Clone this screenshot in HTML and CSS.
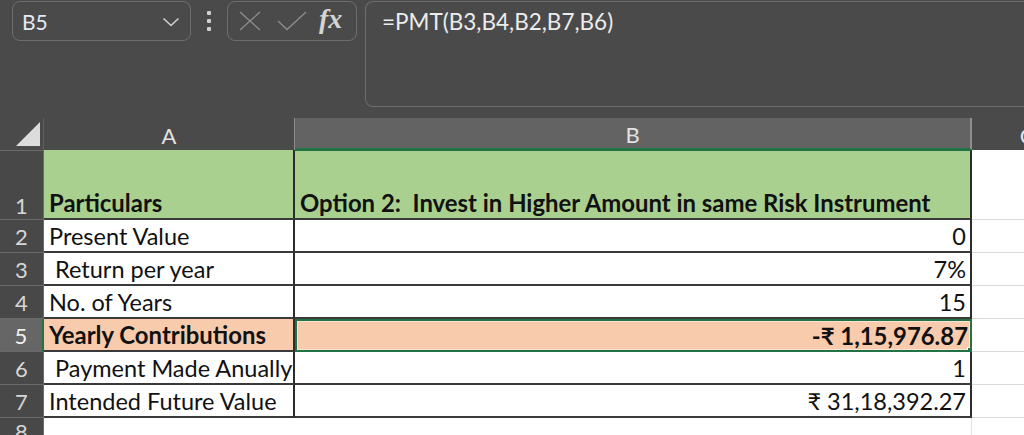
FILE: index.html
```html
<!DOCTYPE html>
<html>
<head>
<meta charset="utf-8">
<title>Excel PMT</title>
<link rel="stylesheet" href="styles.css">
</head>
<body>
<div class="topbar">
  <div class="namebox">
    <span class="nameref">B5</span>
    <svg class="chev" width="18" height="10" viewBox="0 0 18 10"><path d="M1.5 1.5 L9 8.5 L16.5 1.5" fill="none" stroke="#cfcfcf" stroke-width="1.6"/></svg>
  </div>
  <div class="dots">
    <span class="dot"></span><span class="dot"></span><span class="dot"></span>
  </div>
  <div class="fxbox">
    <svg class="ico" width="24" height="20" viewBox="0 0 24 20"><path d="M2 1 L22 19 M22 1 L2 19" fill="none" stroke="#8c8c8c" stroke-width="1.4"/></svg>
    <svg class="ico" width="30" height="20" viewBox="0 0 30 20"><path d="M1 10 L10 18.5 L29 1" fill="none" stroke="#8c8c8c" stroke-width="1.4"/></svg>
    <span class="fx">fx</span>
  </div>
  <div class="formula">=PMT(B3,B4,B2,B7,B6)</div>
</div>
<div class="sheet">
  <div class="corner"><svg width="26" height="26" viewBox="0 0 26 26"><path d="M25 1 L25 25 L1 25 Z" fill="#dcdcdc"/></svg></div>
  <div class="colhead">A</div>
  <div class="colhead sel">B</div>
  <div class="colhead last">C</div>

  <div class="rowhead r1">1</div>
  <div class="cell a green bold bottom">Particulars</div>
  <div class="cell b green bold bottom top-sel pre">Option 2:  Invest in Higher Amount in same Risk Instrument</div>
  <div class="cell c"></div>

  <div class="rowhead">2</div>
  <div class="cell a">Present Value</div>
  <div class="cell b num">0</div>
  <div class="cell c"></div>

  <div class="rowhead">3</div>
  <div class="cell a pre"> Return per year</div>
  <div class="cell b num">7%</div>
  <div class="cell c"></div>

  <div class="rowhead">4</div>
  <div class="cell a">No. of Years</div>
  <div class="cell b num">15</div>
  <div class="cell c"></div>

  <div class="rowhead sel">5</div>
  <div class="cell a orange bold">Yearly Contributions</div>
  <div class="cell b orange bold num active">-₹ 1,15,976.87</div>
  <div class="cell c"></div>

  <div class="rowhead">6</div>
  <div class="cell a pre"> Payment Made Anually</div>
  <div class="cell b num">1</div>
  <div class="cell c"></div>

  <div class="rowhead">7</div>
  <div class="cell a">Intended Future Value</div>
  <div class="cell b num">₹ 31,18,392.27</div>
  <div class="cell c"></div>

  <div class="rowhead r8">8</div>
  <div class="cell a plain"></div>
  <div class="cell b plain"></div>
  <div class="cell c"></div>
</div>
</body>
</html>
```
FILE: styles.css
```css
html, body {
  margin: 0;
  padding: 0;
}
body {
  width: 1024px;
  height: 435px;
  overflow: hidden;
  background: #ffffff;
  font-family: Lato, "Liberation Sans", sans-serif;
}

/* ---------- formula bar ---------- */
.topbar {
  height: 118px;
  box-sizing: border-box;
  background: #4a4a4a;
  display: flex;
  align-items: flex-start;
  padding: 1px 0 0 12px;
}
.namebox {
  width: 179px;
  height: 40px;
  box-sizing: border-box;
  border: 1px solid #6e6e6e;
  border-radius: 8px;
  display: flex;
  align-items: center;
  justify-content: space-between;
  padding: 0 10px 0 9px;
}
.nameref {
  color: #e3e9f2;
  font-size: 21px;
}
.chev {
  display: block;
  margin-top: 2px;
}
.dots {
  width: 36px;
  height: 40px;
  display: flex;
  flex-direction: column;
  align-items: center;
  justify-content: center;
  gap: 4px;
}
.dot {
  width: 4px;
  height: 4px;
  border-radius: 1px;
  background: #cfcfcf;
}
.fxbox {
  width: 130px;
  height: 40px;
  box-sizing: border-box;
  border: 1px solid #6e6e6e;
  border-radius: 8px;
  display: flex;
  align-items: center;
  padding: 0 0 0 10px;
  gap: 15px;
}
.ico {
  display: block;
}
.fx {
  font-family: "Liberation Serif", "DejaVu Serif", serif;
  font-style: italic;
  font-weight: 700;
  font-size: 28px;
  line-height: 1;
  color: #d4d4d4;
  margin-left: -3px;
  margin-top: -4px;
}
.formula {
  flex: 1;
  height: 106px;
  box-sizing: border-box;
  margin-left: 8px;
  border: 1px solid #6e6e6e;
  border-right: none;
  border-radius: 8px 0 0 8px;
  padding: 6px 0 0 16px;
  color: #ececec;
  font-size: 22.5px;
}

/* ---------- sheet ---------- */
.sheet {
  display: grid;
  grid-template-columns: 44px 251px 677px 110px;
  grid-template-rows: 32px 70px repeat(6, 33px) 30px;
  background: #ffffff;
}
.corner {
  background: #4a4a4a;
  display: flex;
  align-items: flex-end;
  justify-content: flex-end;
  padding: 0 2px 3px 0;
  box-sizing: border-box;
  border-right: 1px solid #5e5e5e;
}
.corner svg {
  display: block;
}
.colhead {
  background: #4a4a4a;
  color: #e2e2e2;
  font-size: 22px;
  display: flex;
  align-items: center;
  justify-content: center;
  border-right: 1px solid #8a8a8a;
  box-sizing: border-box;
  padding-top: 2px;
}
.colhead.sel {
  background: #636363;
  border-bottom: 2px solid #217346;
  border-right: 2px solid #8f8f8f;
}
.colhead.last {
  color: #dfe6f3;
  border-right: none;
}
.rowhead {
  background: #484848;
  color: #d6d6d6;
  font-size: 22px;
  display: flex;
  align-items: center;
  justify-content: center;
  border-bottom: 1px solid #6a6a6a;
  border-right: 1px solid #6a6a6a;
  box-sizing: border-box;
}
.rowhead.r1 {
  align-items: flex-end;
  padding-bottom: 0;
  border-top: 1px solid #6a6a6a;
}
.rowhead.sel {
  background: #666666;
  color: #f0f0f0;
  border-right: 2px solid #217346;
}
.rowhead.r8 {
  align-items: flex-start;
  border-bottom: none;
}
.cell {
  box-sizing: border-box;
  font-size: 23.5px;
  color: #111111;
  display: flex;
  align-items: center;
  padding: 0 5px;
  white-space: nowrap;
  overflow: hidden;
}
.cell.a {
  border-right: 2px solid #2c2c2c;
  border-bottom: 2px solid #3a3a3a;
}
.cell.b {
  border-right: 2px solid #2c2c2c;
  border-bottom: 2px solid #3a3a3a;
}
.cell.c {
  border-bottom: 1px solid #dadada;
}
.cell.plain {
  border-bottom: none;
}
.cell.a.plain {
  border-right: none;
}
.cell.b.plain {
  border-right: 1px solid #e2e2e2;
}
.pre {
  white-space: pre;
}
.bold {
  font-weight: 700;
  font-size: 23.9px;
}
.bottom {
  align-items: flex-end;
  padding-bottom: 1px;
}
.green {
  background: #a9d08e;
}
.orange {
  background: #f8cbad;
}
.num {
  justify-content: flex-end;
  padding-right: 4px;
}
.top-sel {
  border-top: 1px solid #217346;
}
.cell.active {
  position: relative;
  border: 2px solid #217346;
  box-shadow: inset 0 0 0 1px #fbe3d3;
  padding-right: 2px;
}
.cell.active::after {
  content: "";
  position: absolute;
  right: -5px;
  bottom: -5px;
  width: 6px;
  height: 6px;
  background: #217346;
  border: 1px solid #ffffff;
}
```
